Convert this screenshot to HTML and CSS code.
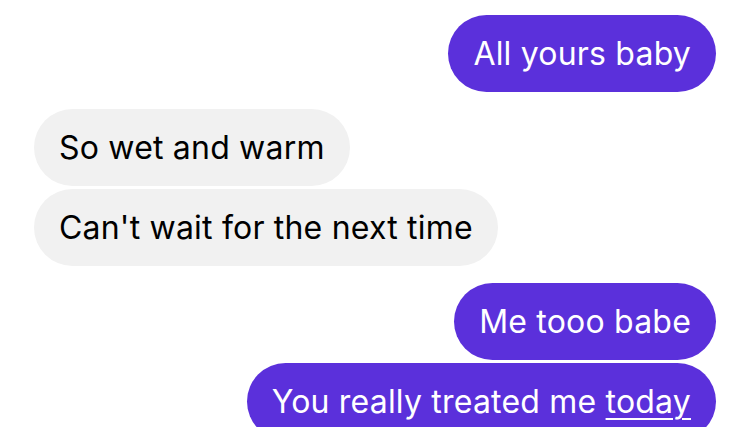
FILE: index.html
```html
<!DOCTYPE html>
<html lang="en">
<head>
    <meta charset="UTF-8">
    <title>Chat</title>
    <link rel="stylesheet" href="styles.css">
</head>
<body>
    <div class="chat">
        <div class="group me">
            <div class="bubble">All yours baby</div>
        </div>
        <div class="group them">
            <div class="bubble">So wet and warm</div>
            <div class="bubble">Can't wait for the next time</div>
        </div>
        <div class="group me">
            <div class="bubble">Me tooo babe</div>
            <div class="bubble">You really treated me <span class="link">today</span></div>
        </div>
    </div>
</body>
</html>
```

FILE: styles.css
```css
body {
    margin: 0;
    padding: 0;
    background-color: #fff;
    font-family: Inter, "Liberation Sans", sans-serif;
    overflow: hidden;
}
.chat {
    display: flex;
    flex-direction: column;
    gap: 17px;
    padding: 15px 34px 0 34px;
}
.group {
    display: flex;
    flex-direction: column;
    gap: 3px;
}
.group.me {
    align-items: flex-end;
}
.group.them {
    align-items: flex-start;
}
.bubble {
    font-size: 32px;
    line-height: 41px;
    letter-spacing: 0.2px;
    padding: 18px 25px;
    border-radius: 39px;
    white-space: nowrap;
}
.me .bubble {
    background-color: #5b30db;
    color: #fff;
}
.them .bubble {
    background-color: #f1f1f1;
    color: #000;
}
.link {
    text-decoration: underline;
    text-decoration-thickness: 2px;
    text-underline-offset: 5px;
}
```
